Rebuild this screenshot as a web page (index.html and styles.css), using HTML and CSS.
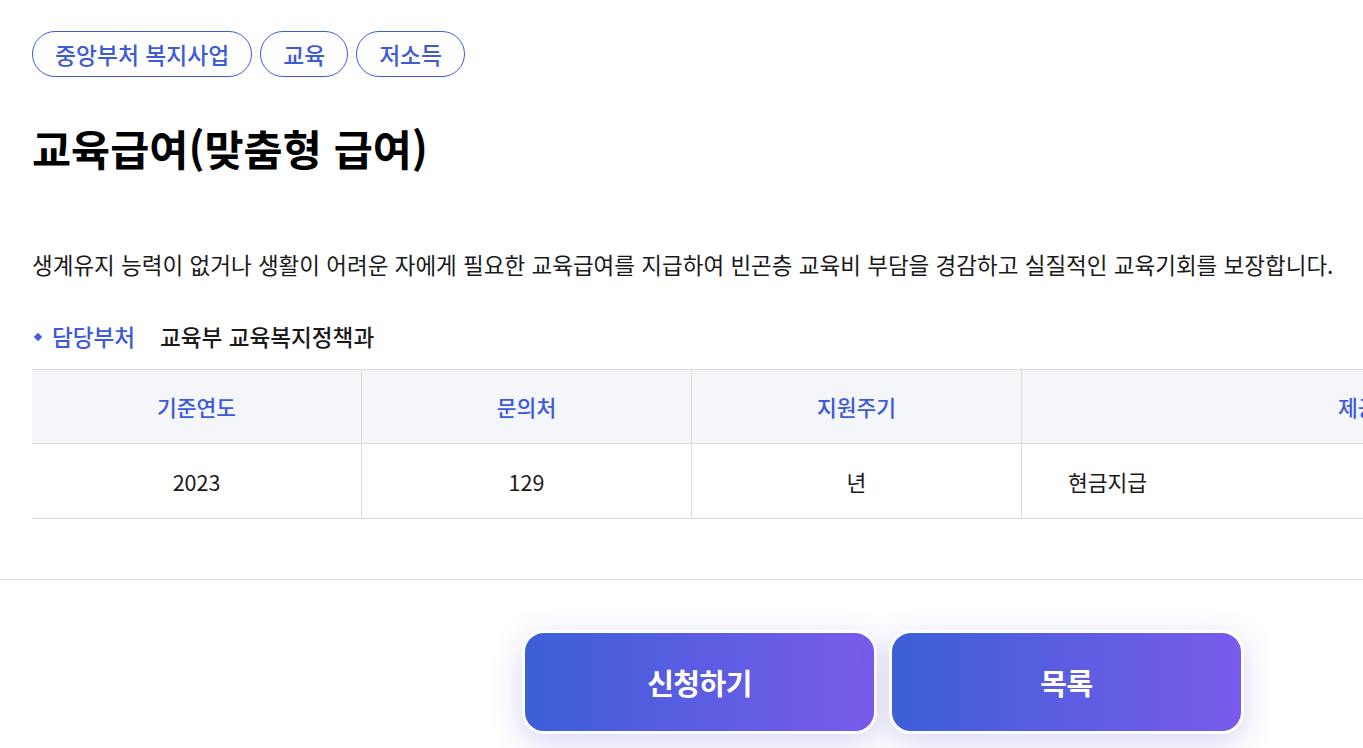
FILE: index.html
```html
<!DOCTYPE html>
<html lang="ko">
<head>
<meta charset="utf-8">
<title>교육급여(맞춤형 급여)</title>
<link rel="stylesheet" href="styles.css">
</head>
<body>
<div class="page">
  <div class="content">
    <ul class="tags">
      <li class="tag">중앙부처 복지사업</li>
      <li class="tag">교육</li>
      <li class="tag">저소득</li>
    </ul>
    <h1 class="title">교육급여(맞춤형 급여)</h1>
    <p class="desc">생계유지 능력이 없거나 생활이 어려운 자에게 필요한 교육급여를 지급하여 빈곤층 교육비 부담을 경감하고 실질적인 교육기회를 보장합니다.</p>
    <div class="dept">
      <span class="dept-label">담당부처</span>
      <span class="dept-value">교육부 교육복지정책과</span>
    </div>
    <table class="info">
      <thead>
        <tr>
          <th class="c1">기준연도</th>
          <th class="c2">문의처</th>
          <th class="c3">지원주기</th>
          <th class="c4">제공유형</th>
        </tr>
      </thead>
      <tbody>
        <tr>
          <td class="center">2023</td>
          <td class="center">129</td>
          <td class="center">년</td>
          <td class="left">현금지급</td>
        </tr>
      </tbody>
    </table>
  </div>
  <div class="divider"></div>
  <div class="actions">
    <a class="btn" href="#">신청하기</a>
    <a class="btn" href="#">목록</a>
  </div>
</div>
</body>
</html>
```
FILE: styles.css
```css
html, body {
  margin: 0;
  padding: 0;
  background: #fff;
  overflow: hidden;
}
body {
  font-family: "Noto Sans CJK KR", "Noto Sans", sans-serif;
  color: #1a1a1a;
}
.page {
  width: 1766px;
  padding-bottom: 60px;
}
.content {
  padding: 31px 32px 0;
}
.tags {
  list-style: none;
  margin: 0;
  padding: 0;
  display: flex;
  gap: 8px;
}
.tag {
  height: 44px;
  box-sizing: content-box;
  border: 1px solid #3d5ad8;
  border-radius: 24px;
  padding: 0 22px;
  font-size: 22.8px;
  font-weight: 500;
  color: #3d5ad8;
  display: flex;
  align-items: center;
}
.title {
  margin: 41px 0 0;
  font-size: 42.5px;
  font-weight: 700;
  line-height: 59px;
  color: #000;
}
.desc {
  margin: 70px 0 0;
  font-size: 22.5px;
  line-height: 34px;
  color: #1a1a1a;
  white-space: nowrap;
}
.dept {
  margin-top: 39px;
  display: flex;
  align-items: center;
  font-size: 22.6px;
  line-height: 34px;
}
.dept-label {
  color: #3d5ad8;
  font-weight: 500;
  padding-left: 20px;
  position: relative;
  width: 108px;
}
.dept-label::before {
  content: "";
  position: absolute;
  left: 3px;
  top: 14px;
  width: 6px;
  height: 6px;
  background: #4a5ae0;
  transform: rotate(45deg);
}
.dept-value {
  font-weight: 500;
  color: #1a1a1a;
}
.info {
  margin-top: 15px;
  border-collapse: collapse;
  width: 1702px;
  table-layout: fixed;
  font-size: 21.5px;
}
.info th, .info td {
  border: 1px solid #dcdcdc;
  border-left: 1px solid #e0e0e0;
}
.info tr > :first-child { border-left: none; }
.info th {
  background: #f4f6fa;
  color: #3d5ad8;
  font-weight: 500;
  height: 73px;
  padding: 0;
  text-align: center;
}
.info td {
  height: 74px;
  padding: 0;
  color: #1a1a1a;
}
.c1, .c2, .c3 { width: 329px; }
.c4 { width: auto; }
.center { text-align: center; }
.left { text-align: left; padding-left: 46px !important; }
.divider {
  margin-top: 60px;
  height: 1px;
  background: #dedede;
}
.actions {
  display: flex;
  justify-content: center;
  gap: 12px;
  padding-top: 50px;
}
.btn {
  width: 349px;
  height: 98px;
  border: 3px solid #fff;
  border-radius: 22px;
  background: linear-gradient(90deg, #3c5fd8 0%, #7a5beb 100%);
  box-shadow: 0 8px 30px rgba(90, 90, 210, 0.25);
  color: #fff;
  font-size: 29px;
  font-weight: 700;
  text-decoration: none;
  display: flex;
  align-items: center;
  justify-content: center;
  letter-spacing: -0.5px;
}
```
